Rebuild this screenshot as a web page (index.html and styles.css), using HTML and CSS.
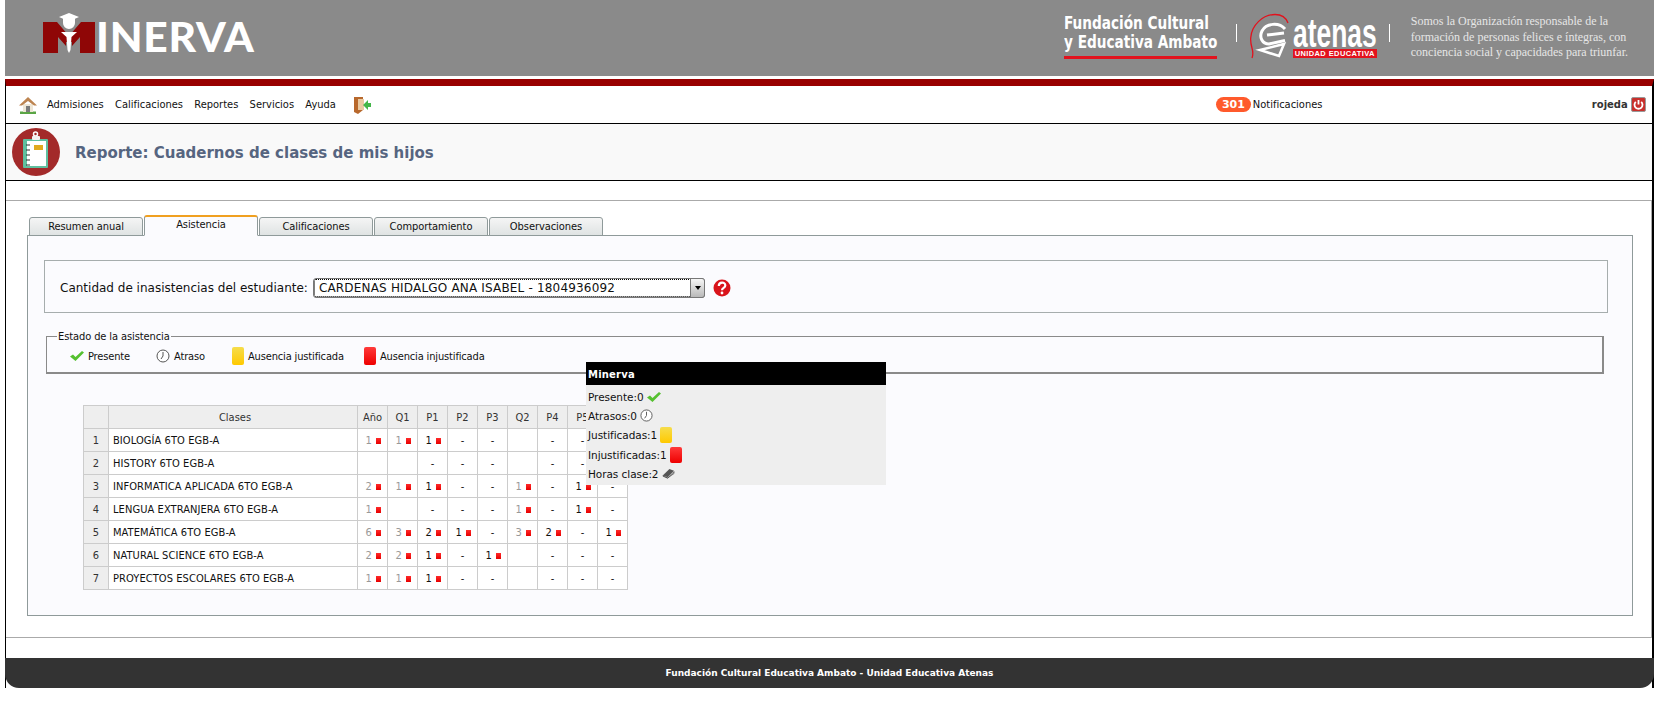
FILE: index.html
```html
<!DOCTYPE html>
<html lang="es">
<head>
<meta charset="utf-8">
<title>Minerva</title>
<link rel="stylesheet" href="styles.css">
</head>
<body>
<div class="page">
  <header class="banner">
    <div class="logo">
      <svg class="logo-m" viewBox="0 0 54 42" width="54" height="42">
        <path d="M1 10h14l12 14 12-14h14v31H38V25l-8 9v-4h-6v4l-8-9v16H1z" fill="#8f0606"/>
        <path d="M27 1l10 4-4 1.700V11a6 6 0 0 1-12 0V6.700L17 5z" fill="#fff"/>
        <path d="M19 20h16l-5.500 5-1 13-1.500 3-1.500-3-1-13z" fill="#fff"/>
      </svg>
      <span class="logo-text">INERVA</span>
    </div>
    <div class="brand">
      <div class="foundation">
        <div class="foundation-text">Fundación Cultural<br>y Educativa Ambato</div>
      </div>
      <span class="pipe pipe-first"></span>
      <div class="atenas">
        <svg class="helmet" viewBox="0 0 43 46" width="43" height="46">
          <path d="M2 45c3-8-2-10-1.300-20C1.500 12 13 1.500 25 1.500c6 0 11 3 13 8.500" fill="none" stroke="#e2121d" stroke-width="1.300"/>
          <path d="M35 16C29 9 16 10 12 18c-3 6 0 13 7 13l16-3.500" fill="none" stroke="#fff" stroke-width="3"/>
          <path d="M17 22l17-2" fill="none" stroke="#fff" stroke-width="3"/>
          <path d="M10 37l24-6-5 12z" fill="none" stroke="#fff" stroke-width="2.600"/>
        </svg>
        <div class="atenas-words">
          <span class="atenas-name">atenas</span>
          <span class="atenas-tag">UNIDAD EDUCATIVA</span>
        </div>
      </div>
      <span class="pipe pipe-last"></span>
      <p class="motto">Somos la Organización responsable de la<br>formación de personas felices e íntegras, con<br>conciencia social y capacidades para triunfar.</p>
    </div>
  </header>

  <div class="shell">
    <nav class="nav">
      <svg class="home" viewBox="0 0 18 18" width="18" height="18">
        <path d="M1 15.500h16V18H1z" fill="#5aa545"/>
        <path d="M4 8h10v8H4z" fill="#eee6d6"/>
        <path d="M7 10h4v6H7z" fill="#7a7a7a"/>
        <path d="M9 1L0 9.500h3L9 5l6 4.500h3z" fill="#bd8450"/>
      </svg>
      <ul class="menu">
        <li>Admisiones</li>
        <li>Calificaciones</li>
        <li>Reportes</li>
        <li>Servicios</li>
        <li>Ayuda</li>
      </ul>
      <svg class="door" viewBox="0 0 18 18" width="18" height="18">
        <path d="M1 1h9v13l-5 4-4-2z" fill="#b8682c"/>
        <path d="M5 3h6v11H5z" fill="#e9c9a0"/>
        <path d="M10 9l5-5v3h3v4h-3v3z" fill="#43b649"/>
      </svg>
      <div class="notif"><span class="badge">301</span><span>Notificaciones</span></div>
      <div class="user">
        <span>rojeda</span>
        <svg class="power" viewBox="0 0 15 15" width="15" height="15">
          <rect x=".5" y=".5" width="14" height="14" rx="1.500" fill="#c8302c" stroke="#999"/>
          <path d="M4.800 4.800a4 4 0 1 0 5.400 0" fill="none" stroke="#fff" stroke-width="1.800"/>
          <path d="M7.500 3v4.500" stroke="#fff" stroke-width="1.800"/>
        </svg>
      </div>
    </nav>

    <div class="title-band">
      <svg class="title-icon" viewBox="0 0 48 50" width="48" height="50">
        <circle cx="24" cy="25" r="24" fill="#a32a2a"/>
        <rect x="11" y="12" width="25" height="29" rx="1" fill="#5fbf9f"/>
        <rect x="15" y="14" width="19" height="25" fill="#fff"/>
        <circle cx="23.500" cy="7" r="2" fill="none" stroke="#fff" stroke-width="1.500"/>
        <rect x="20" y="9" width="8" height="4" rx="1" fill="#f2f2f2"/>
        <rect x="22" y="18" width="9" height="5" fill="#e0a91e"/>
        <path d="M14 18h4M14 23h4M14 28h4M14 33h4M14 38h4" stroke="#333"/>
      </svg>
      <h1 class="title">Reporte: Cuadernos de clases de mis hijos</h1>
    </div>

    <main class="content">
      <div class="tabs">
        <div class="tab">Resumen anual</div>
        <div class="tab active">Asistencia</div>
        <div class="tab">Calificaciones</div>
        <div class="tab">Comportamiento</div>
        <div class="tab">Observaciones</div>
      </div>
      <section class="panel">
        <div class="selector">
          <label class="selector-label" for="student">Cantidad de inasistencias del estudiante:</label>
          <div class="select-wrap">
            <select id="student" class="select"><option>CARDENAS HIDALGO ANA ISABEL - 1804936092</option></select>
            <span class="select-arrow"></span>
          </div>
          <svg class="help" viewBox="0 0 18 18" width="18" height="18">
            <circle cx="9" cy="9" r="8.500" fill="#d9141b"/>
            <path d="M5.800 7c0-4.500 6.500-4.500 6.500-.5 0 2.500-3.300 2.300-3.300 4.700" fill="none" stroke="#fff" stroke-width="2.200"/>
            <circle cx="9" cy="14" r="1.400" fill="#fff"/>
          </svg>
        </div>

        <fieldset class="legend-box">
          <legend class="legend-title">Estado de la asistencia</legend>
          <div class="legend-items">
            <span class="item item-present"><svg class="check" viewBox="0 0 14 10" width="14" height="10"><path d="M0 5.500L3 3.500 5.500 6 12 0l2 1.500L5.500 10z" fill="#55c030"/></svg>Presente</span>
            <span class="item item-late"><svg class="clock" viewBox="0 0 14 14" width="14" height="14"><circle cx="7" cy="7" r="6" fill="#fff" stroke="#555"/><path d="M7 3v4l-2 3" fill="none" stroke="#555"/></svg>Atraso</span>
            <span class="item item-just"><span class="card card-yellow"></span>Ausencia justificada</span>
            <span class="item"><span class="card card-red"></span>Ausencia injustificada</span>
          </div>
        </fieldset>

        <table class="grid">
          <colgroup><col class="c-n"><col class="c-name"><col class="c-v"><col class="c-v"><col class="c-v"><col class="c-v"><col class="c-v"><col class="c-v"><col class="c-v"><col class="c-v"><col class="c-v"></colgroup>
          <thead>
            <tr><th></th><th class="head-name">Clases</th><th>Año</th><th>Q1</th><th>P1</th><th>P2</th><th>P3</th><th>Q2</th><th>P4</th><th>P5</th><th>P6</th></tr>
          </thead>
          <tbody>
            <tr><th>1</th><td class="name">BIOLOGÍA 6TO EGB-A</td><td class="sum">1<i class="r"></i></td><td class="sum">1<i class="r"></i></td><td>1<i class="r"></i></td><td>-</td><td>-</td><td></td><td>-</td><td>-</td><td>-</td></tr>
            <tr><th>2</th><td class="name">HISTORY 6TO EGB-A</td><td></td><td></td><td>-</td><td>-</td><td>-</td><td></td><td>-</td><td>-</td><td>-</td></tr>
            <tr><th>3</th><td class="name">INFORMATICA APLICADA 6TO EGB-A</td><td class="sum">2<i class="r"></i></td><td class="sum">1<i class="r"></i></td><td>1<i class="r"></i></td><td>-</td><td>-</td><td class="sum">1<i class="r"></i></td><td>-</td><td>1<i class="r"></i></td><td>-</td></tr>
            <tr><th>4</th><td class="name">LENGUA EXTRANJERA 6TO EGB-A</td><td class="sum">1<i class="r"></i></td><td></td><td>-</td><td>-</td><td>-</td><td class="sum">1<i class="r"></i></td><td>-</td><td>1<i class="r"></i></td><td>-</td></tr>
            <tr><th>5</th><td class="name">MATEMÁTICA 6TO EGB-A</td><td class="sum">6<i class="r"></i></td><td class="sum">3<i class="r"></i></td><td>2<i class="r"></i></td><td>1<i class="r"></i></td><td>-</td><td class="sum">3<i class="r"></i></td><td>2<i class="r"></i></td><td>-</td><td>1<i class="r"></i></td></tr>
            <tr><th>6</th><td class="name">NATURAL SCIENCE 6TO EGB-A</td><td class="sum">2<i class="r"></i></td><td class="sum">2<i class="r"></i></td><td>1<i class="r"></i></td><td>-</td><td>1<i class="r"></i></td><td></td><td>-</td><td>-</td><td>-</td></tr>
            <tr><th>7</th><td class="name">PROYECTOS ESCOLARES 6TO EGB-A</td><td class="sum">1<i class="r"></i></td><td class="sum">1<i class="r"></i></td><td>1<i class="r"></i></td><td>-</td><td>-</td><td></td><td>-</td><td>-</td><td>-</td></tr>
          </tbody>
        </table>

        <aside class="tip">
          <div class="tip-head">Minerva</div>
          <div class="tip-body">
            <div class="tip-row">Presente:0<svg class="check" viewBox="0 0 14 10" width="14" height="10"><path d="M0 5.500L3 3.500 5.500 6 12 0l2 1.500L5.500 10z" fill="#55c030"/></svg></div>
            <div class="tip-row">Atrasos:0<svg class="clock" viewBox="0 0 14 14" width="13" height="13"><circle cx="7" cy="7" r="6" fill="#fff" stroke="#555"/><path d="M7 3v4l-2 3" fill="none" stroke="#555"/></svg></div>
            <div class="tip-row">Justificadas:1<span class="card card-yellow"></span></div>
            <div class="tip-row">Injustificadas:1<span class="card card-red"></span></div>
            <div class="tip-row">Horas clase:2<svg class="book" viewBox="0 0 14 12" width="13" height="11"><path d="M1 8l7-7 5 2-7 7z" fill="#555"/><path d="M1 8l5 3 7-7v2l-7 5-5-2z" fill="#ddd" stroke="#333" stroke-width=".7"/></svg></div>
          </div>
        </aside>
      </section>
    </main>

    <footer class="footer">Fundación Cultural Educativa Ambato - Unidad Educativa Atenas</footer>
  </div>
</div>
</body>
</html>
```
FILE: styles.css
```css
* { box-sizing: border-box; }
html, body { margin: 0; padding: 0; background: #fff; }
body { font-family: "DejaVu Sans Condensed", "DejaVu Sans", sans-serif; font-size: 11px; color: #111; height: 718px; overflow: hidden; }
.page { width: 1649px; margin-left: 5px; }

/* banner */
.banner { height: 76px; background: #8a8a8a; display: flex; justify-content: space-between; align-items: flex-start; }
.logo { display: flex; align-items: flex-end; margin: 12px 0 0 37px; height: 42px; }
.logo-m { display: block; flex-shrink: 0; }
.logo-text { font-family: Lato, sans-serif; font-weight: 900; font-size: 42.500px; line-height: 36px; color: #fff; letter-spacing: .8px; margin-left: 0; height: 36px; }
.brand { display: flex; align-items: flex-start; }
.foundation { width: 153px; height: 45px; margin-top: 14px; border-bottom: 3px solid #e2121d; }
.foundation-text { font-family: "DejaVu Sans Condensed", sans-serif; font-weight: 700; font-size: 18.500px; line-height: 18.500px; color: #fff; white-space: nowrap; transform: scaleX(.82); transform-origin: left; }
.pipe { width: 1px; height: 18px; background: #fff; margin-top: 24px; flex-shrink: 0; }
.pipe-first { margin-left: 19px; margin-right: 13px; }
.pipe-last { margin-left: 12px; }
.atenas { display: flex; width: 127px; height: 50px; margin-top: 13px; }
.helmet { flex-shrink: 0; display: block; }
.atenas-words { width: 84px; display: flex; flex-direction: column; align-items: flex-start; }
.atenas-name { display: block; font-family: "Liberation Sans", sans-serif; font-weight: 700; font-size: 40px; line-height: 40px; height: 36px; color: #fff; transform: scaleX(.66); transform-origin: left; }
.atenas-tag { background: #e2121d; color: #fff; font-family: "Liberation Sans", sans-serif; font-weight: 700; font-size: 7.500px; line-height: 9px; width: 84px; text-align: center; letter-spacing: .4px; white-space: nowrap; }
.motto { margin: 14px 26px 0 21px; font-family: "Liberation Serif", serif; font-size: 12px; line-height: 15.500px; color: #e6e6e6; white-space: nowrap; }

/* shell */
.shell { margin-top: 3px; border-top: 7px solid #990000; border-left: 1px solid #000; border-right: 2px solid #000; }
.nav { height: 38px; padding-left: 13px; border-bottom: 1px solid #000; display: flex; align-items: center; }
.home { display: block; flex-shrink: 0; }
.menu { list-style: none; margin: 0 0 0 10px; padding: 0; display: flex; gap: 11.300px; }
.door { margin-left: 17px; flex-shrink: 0; }
.notif { margin-left: 845px; display: flex; align-items: center; gap: 2px; width: 376px; }
.badge { background: #ff5a2c; color: #fff; font-family: "DejaVu Sans", sans-serif; font-weight: 700; font-size: 11px; line-height: 15px; height: 15px; width: 35px; text-align: center; border-radius: 8px; }
.user { display: flex; align-items: center; gap: 3px; font-family: "DejaVu Sans", sans-serif; font-weight: 700; font-size: 10px; color: #333; }
.title-band { height: 57px; background: #f9f9f9; border-bottom: 1px solid #000; display: flex; align-items: center; padding-left: 6px; }
.title-icon { flex-shrink: 0; }
.title { margin: 2px 0 0 15px; font-family: "DejaVu Sans", sans-serif; font-weight: 700; font-size: 15px; color: #566580; }

/* content */
.content { margin-top: 19px; border-top: 1px solid #aaa; border-bottom: 1px solid #aaa; padding: 14px 18px 21px 21px; border-right: 1px solid #aaa; }
.tabs { display: flex; align-items: flex-end; gap: 1px; padding-left: 2px; height: 21px; position: relative; z-index: 1; margin-bottom: -1px; letter-spacing: -.06px; }
.tab { width: 114px; height: 19px; line-height: 18px; text-align: center; border: 1px solid #8f9a9a; border-radius: 3px 3px 0 0; background: linear-gradient(#f5f5f5, #dfe3e3); }
.tab.active { height: 21px; line-height: 16px; border-top: 2px solid #f0a020; border-bottom-color: #fbfbfe; background: #fbfbfe; }
.panel { position: relative; height: 381px; background: #fbfbfe; border: 1px solid #8f9a9a; padding: 24px 24px 0 16px; }
.selector { height: 53px; border: 1px solid #a6adad; display: flex; align-items: center; padding: 2px 0 0 15px; }
.selector-label { font-family: "DejaVu Sans", sans-serif; font-size: 12px; }
.select-wrap { position: relative; margin-left: 5px; width: 392px; height: 20px; }
.select { appearance: none; display: block; width: 100%; height: 100%; border: 1px solid #777; border-radius: 3px; background: #fff; outline: 1px dotted #000; outline-offset: -2px; padding: 0 20px 0 5px; font-family: "DejaVu Sans", sans-serif; font-size: 12px; letter-spacing: .18px; color: #111; }
.select-arrow { position: absolute; right: 0; top: 0; width: 15px; height: 20px; border: 1px solid #777; border-radius: 0 3px 3px 0; background: linear-gradient(#f6f6f6, #b9b9b9); }
.select-arrow::after { content: ""; position: absolute; left: 4px; top: 7px; border: 3px solid transparent; border-top: 4px solid #000; border-bottom: 0; }
.help { margin-left: 8px; flex-shrink: 0; }

.legend-box { margin: 17px 4px 0 2px; height: 44px; padding: 0 0 0 23px; border: 1px solid #8a8a8a; border-width: 1px 2px 2px 1px; }
.legend-title { padding: 0 1px; margin-left: -13px; font-size: 11px; line-height: 13px; letter-spacing: -.1px; }
.legend-items { display: flex; align-items: center; height: 20px; margin-top: 3px; letter-spacing: -.15px; }
.item { display: flex; align-items: center; gap: 4px; white-space: nowrap; }
.item-present { width: 86px; }
.item-late { width: 76px; }
.item-just { width: 132px; }
.card { display: inline-block; flex-shrink: 0; width: 12px; height: 18px; border-radius: 2px; }
.card-yellow { background: linear-gradient(#f6dd4c, #ffc900); }
.card-red { background: linear-gradient(#ff3a3a, #ee0000); }

.grid { margin: 31px 0 0 39px; border-collapse: collapse; table-layout: fixed; width: 544px; background: #fff; }
.c-n { width: 25px; }
.c-name { width: 249px; }
.c-v { width: 30px; }
.grid th, .grid td { border: 1px solid #ccc; height: 23px; padding: 0; font-weight: 400; text-align: center; white-space: nowrap; }
.grid th { background: #eee; color: #333; }
.grid th.head-name { padding-left: 4px; }
.grid td { color: #111; font-size: 11px; }
.grid td.name { text-align: left; padding-left: 4px; letter-spacing: .08px; }
.grid td.sum { color: #999; }
.r { display: inline-block; width: 5px; height: 6px; margin: 0 -2px 0 4.500px; background: linear-gradient(#ff2a2a, #e60000); }

.tip { position: absolute; left: 558px; top: 126px; width: 300px; height: 123px; background: #eee; }
.tip-head { height: 23px; padding: 2px 0 0 2px; line-height: 21px; background: #000; color: #fff; font-family: "DejaVu Sans", sans-serif; font-weight: 700; font-size: 10px; letter-spacing: .2px; }
.tip-body { padding: 2px 0 0 2px; font-family: "DejaVu Sans", sans-serif; font-size: 10.500px; letter-spacing: -.05px; }
.tip-row { height: 19.300px; display: flex; align-items: center; gap: 3px; white-space: nowrap; }
.tip-row .card { width: 12px; height: 16px; }

/* footer */
.footer { margin: 20px -2px 0 -1px; padding-top: 1px; height: 30px; background: #333; color: #fff; border-radius: 0 0 14px 14px; text-align: center; font-family: "DejaVu Sans", sans-serif; font-weight: 700; font-size: 9px; line-height: 29px; }
```
